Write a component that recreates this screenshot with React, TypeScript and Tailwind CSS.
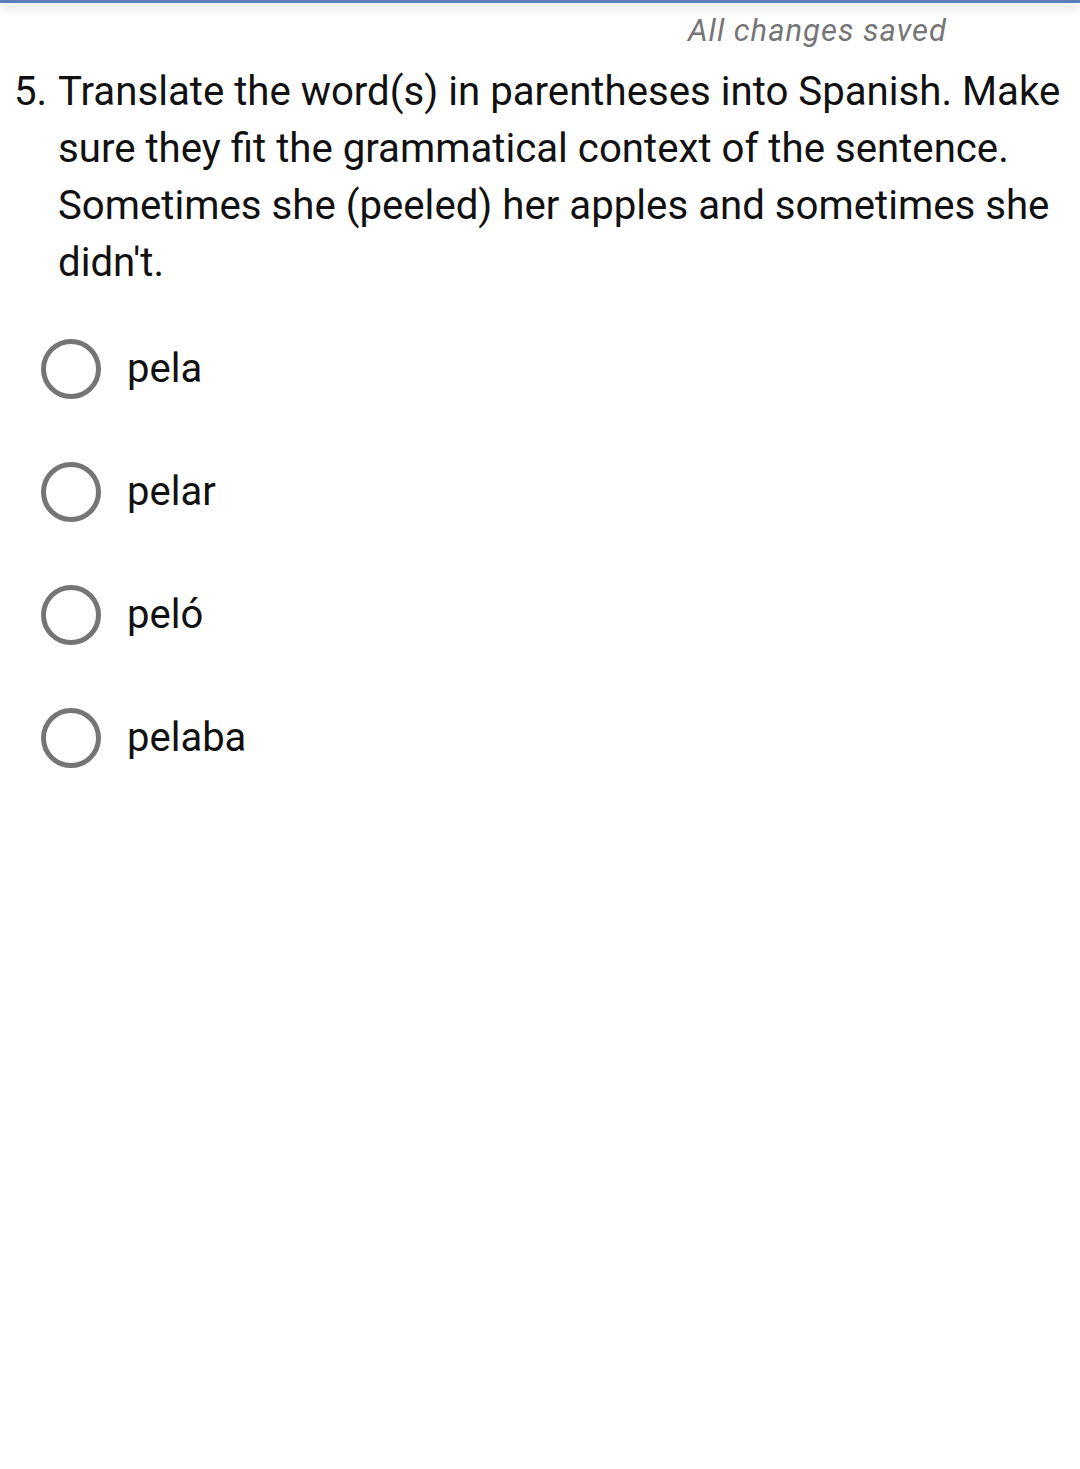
import React from "react";

const options = ["pela", "pelar", "peló", "pelaba"];

export default function App() {
  return (
    <div className="w-[1080px] h-[1469px] bg-white overflow-hidden" style={{ fontFamily: "Roboto, 'Noto Sans', sans-serif" }}>
      <div className="relative h-[3px] bg-[#5b7db8] shadow-[0_5px_10px_rgba(0,0,0,0.22)]" />
      <div className="flex justify-end pr-[133px] pt-[9px]">
        <span className="italic text-[31px] leading-[38px] tracking-[1px] text-[#757575]">All changes saved</span>
      </div>
      <div className="flex pl-[14px] pr-[6px] mt-[13px] text-[40.2px] leading-[57px] text-[#111]">
        <span className="w-[44px] shrink-0">5.</span>
        <p>
          Translate the word(s) in parentheses into Spanish. Make sure they fit the grammatical context of the sentence. Sometimes she (peeled) her apples and sometimes she didn't.
        </p>
      </div>
      <div className="flex flex-col gap-[63px] pl-[41px] mt-[48px]">
        {options.map((o) => (
          <div key={o} className="flex items-center h-[60px]">
            <div className="w-[60px] h-[60px] rounded-full border-[5px] border-[#757575] shrink-0" />
            <span className="ml-[26px] text-[40px] text-[#111] leading-none">{o}</span>
          </div>
        ))}
      </div>
    </div>
  );
}
